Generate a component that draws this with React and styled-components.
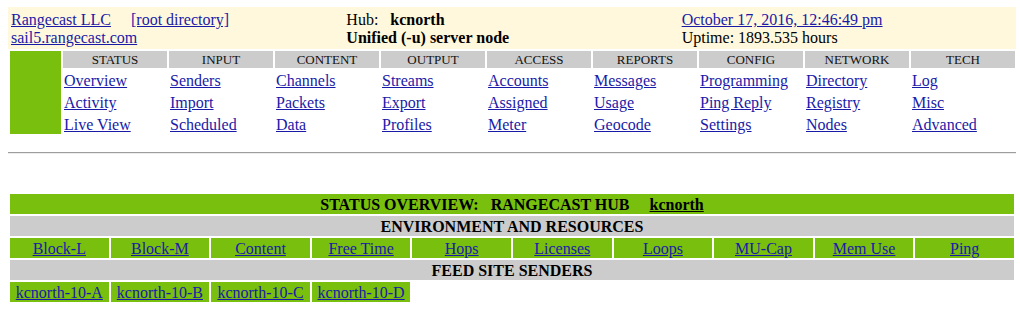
import React from 'react'
import styled, { createGlobalStyle } from 'styled-components'

const green = '#78bf0e'
const gray = '#cccccc'

const GlobalStyle = createGlobalStyle`
  body {
    margin: 7px 0 0 8px;
    background: #fff;
    color: #000;
    font-family: "Liberation Serif", "Times New Roman", serif;
    font-size: 16px;
    line-height: 18px;
  }
  a { color: #1a1aa8; }
`

const Page = styled.div`
  width: 1008px;
`

const TopBar = styled.div`
  background: #fff8dc;
  display: grid;
  grid-template-columns: repeat(3, 1fr);
  gap: 2px;
  padding: 2px;
`

const TopCell = styled.div`
  padding: 2px 1px 0;
  white-space: nowrap;
`

const Nav = styled.div`
  display: grid;
  grid-template-columns: 51px repeat(9, 104px);
  grid-template-rows: 17px repeat(3, 20px);
  gap: 2px;
  padding: 2px;
`

const Swatch = styled.div`
  grid-row: 1 / 5;
  grid-column: 1;
  background: ${green};
`

const NavHead = styled.div`
  background: ${gray};
  font-size: 13px;
  line-height: 15px;
  padding: 1px;
  text-align: center;
  color: #111;
`

const NavLink = styled.div`
  padding: 2px 1px 0;
  white-space: nowrap;
`

const Rule = styled.hr`
  margin: 16px 0 0;
  height: 0;
  border: 0;
  border-top: 1px solid #9d9d9d;
  border-bottom: 1px solid #ececec;
`

const Status = styled.div`
  margin-top: 38px;
  display: grid;
  grid-template-columns: repeat(10, 1fr);
  gap: 2px;
  padding: 2px;
`

const Banner = styled.div`
  grid-column: 1 / -1;
  background: ${p => (p.$green ? green : gray)};
  font-weight: bold;
  text-align: center;
  height: 20px;
  box-sizing: border-box;
  padding: 2px 1px 0;
  white-space: pre;

  a { color: #000; }
`

const Cell = styled.div`
  background: ${green};
  text-align: center;
  height: 20px;
  box-sizing: border-box;
  padding: 2px 1px 0;
  white-space: nowrap;
`

const menu = [
  ['STATUS', ['Overview', 'Activity', 'Live View']],
  ['INPUT', ['Senders', 'Import', 'Scheduled']],
  ['CONTENT', ['Channels', 'Packets', 'Data']],
  ['OUTPUT', ['Streams', 'Export', 'Profiles']],
  ['ACCESS', ['Accounts', 'Assigned', 'Meter']],
  ['REPORTS', ['Messages', 'Usage', 'Geocode']],
  ['CONFIG', ['Programming', 'Ping Reply', 'Settings']],
  ['NETWORK', ['Directory', 'Registry', 'Nodes']],
  ['TECH', ['Log', 'Misc', 'Advanced']],
]

const resources = ['Block-L', 'Block-M', 'Content', 'Free Time', 'Hops', 'Licenses', 'Loops', 'MU-Cap', 'Mem Use', 'Ping']
const senders = ['kcnorth-10-A', 'kcnorth-10-B', 'kcnorth-10-C', 'kcnorth-10-D']

const nb = n => '\u00a0'.repeat(n)

const App = () => {
  return (
    <Page>
      <GlobalStyle />
      <TopBar>
        <TopCell>
          <a href="#">Rangecast LLC</a>{nb(5)}<a href="#">[root directory]</a>
          <br />
          <a href="#">sail5.rangecast.com</a>
        </TopCell>
        <TopCell>
          Hub:{nb(3)}<b>kcnorth</b>
          <br />
          <b>Unified (-u) server node</b>
        </TopCell>
        <TopCell>
          <a href="#">October 17, 2016, 12:46:49 pm</a>
          <br />
          Uptime: 1893.535 hours
        </TopCell>
      </TopBar>

      <Nav>
        <Swatch />
        {menu.map(([title], i) => (
          <NavHead key={title} style={{ gridRow: 1, gridColumn: i + 2 }}>{title}</NavHead>
        ))}
        {[0, 1, 2].map(r =>
          menu.map(([title, links], i) => (
            <NavLink key={title + r} style={{ gridRow: r + 2, gridColumn: i + 2 }}>
              <a href="#">{links[r]}</a>
            </NavLink>
          ))
        )}
      </Nav>

      <Rule />

      <Status>
        <Banner $green>
          STATUS OVERVIEW:{nb(3)}RANGECAST HUB{nb(5)}<a href="#">kcnorth</a>
        </Banner>
        <Banner>ENVIRONMENT AND RESOURCES</Banner>
        {resources.map(r => (
          <Cell key={r}><a href="#">{r}</a></Cell>
        ))}
        <Banner>FEED SITE SENDERS</Banner>
        {senders.map(s => (
          <Cell key={s}><a href="#">{s}</a></Cell>
        ))}
      </Status>
    </Page>
  )
}

export default App
